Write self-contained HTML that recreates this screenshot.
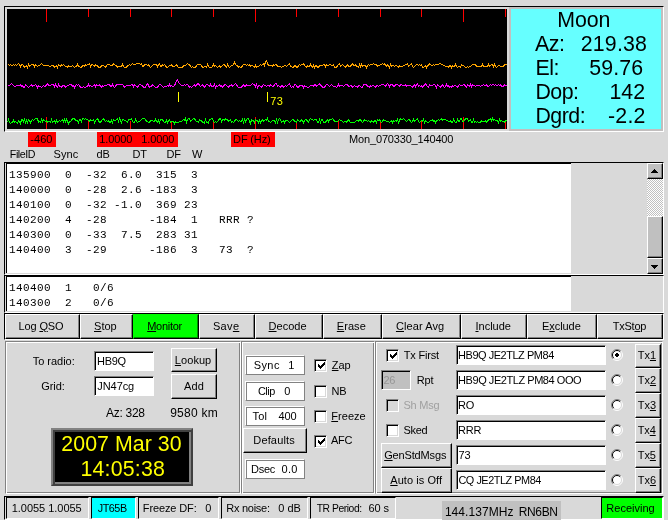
<!DOCTYPE html>
<html lang="en"><head><meta charset="utf-8"><title>WSJT 5 - JT65B</title>
<style>
html,body{margin:0;padding:0}
body{width:668px;height:520px;overflow:hidden;background:#d9d9d9;font-family:"Liberation Sans",Arial,sans-serif;font-size:11px;color:#000}
#app{position:relative;width:668px;height:520px;overflow:hidden;background:#d9d9d9}
#app div{position:absolute;box-sizing:border-box}
.t{position:absolute;line-height:1;white-space:pre;font-family:"Liberation Sans",Arial,sans-serif}
.m{font-family:"Liberation Mono","Courier New",monospace;letter-spacing:0.4px}
u{text-decoration:underline;text-underline-offset:1px;text-decoration-thickness:1px}
.sunken{border:1px solid;border-color:#828282 #fff #fff #828282;box-shadow:inset 1px 1px 0 #000}
.entry{border:1px solid;border-color:#828282 #fff #fff #828282;box-shadow:inset 1px 1px 0 #000;background:#fff}
.raised{border:1px solid;border-color:#fff #000 #000 #fff;box-shadow:inset -1px -1px 0 #828282}
.btn{border:1px solid #000;box-shadow:inset 1px 1px 0 #fff,inset -1px -1px 0 #828282}
.groove{border:1px solid;border-color:#828282 #fff #fff #828282;box-shadow:inset 1px 1px 0 #fff,inset -1px -1px 0 #828282}
.ridge{border:1px solid;border-color:#fff #828282 #828282 #fff;box-shadow:inset 1px 1px 0 #828282,inset -1px -1px 0 #fff;background:#fff}
.chk{border:1px solid;border-color:#828282 #fff #fff #828282;box-shadow:inset 1px 1px 0 #000,inset -1px -1px 0 #d9d9d9;background:#fff}
.red{background:#ff0000}
svg{position:absolute;left:0;top:0;overflow:visible}
#app #txt{left:0;top:0;width:668px;height:520px;will-change:transform}
.sunk1{border:1px solid;border-color:#000 #fff #fff #000}

</style></head>
<body>
<div id="app">
<div class="sunk1" style="left:4px;top:6px;width:660px;height:126px;"></div>
<div style="left:7px;top:9px;width:500px;height:120px;background:#000;overflow:hidden"><svg width="500" height="120" viewBox="0 0 500 120" ><rect x="39" y="0" width="1" height="13" fill="#f00" shape-rendering="crispEdges"/><rect x="39" y="108" width="1" height="12" fill="#f00" shape-rendering="crispEdges"/><rect x="81" y="0" width="1" height="8" fill="#f00" shape-rendering="crispEdges"/><rect x="81" y="112" width="1" height="8" fill="#f00" shape-rendering="crispEdges"/><rect x="123" y="0" width="1" height="8" fill="#f00" shape-rendering="crispEdges"/><rect x="123" y="112" width="1" height="8" fill="#f00" shape-rendering="crispEdges"/><rect x="164" y="0" width="1" height="8" fill="#f00" shape-rendering="crispEdges"/><rect x="164" y="112" width="1" height="8" fill="#f00" shape-rendering="crispEdges"/><rect x="206" y="0" width="1" height="8" fill="#f00" shape-rendering="crispEdges"/><rect x="206" y="112" width="1" height="8" fill="#f00" shape-rendering="crispEdges"/><rect x="248" y="0" width="1" height="13" fill="#f00" shape-rendering="crispEdges"/><rect x="248" y="108" width="1" height="12" fill="#f00" shape-rendering="crispEdges"/><rect x="289" y="0" width="1" height="8" fill="#f00" shape-rendering="crispEdges"/><rect x="289" y="112" width="1" height="8" fill="#f00" shape-rendering="crispEdges"/><rect x="331" y="0" width="1" height="8" fill="#f00" shape-rendering="crispEdges"/><rect x="331" y="112" width="1" height="8" fill="#f00" shape-rendering="crispEdges"/><rect x="373" y="0" width="1" height="8" fill="#f00" shape-rendering="crispEdges"/><rect x="373" y="112" width="1" height="8" fill="#f00" shape-rendering="crispEdges"/><rect x="414" y="0" width="1" height="8" fill="#f00" shape-rendering="crispEdges"/><rect x="414" y="112" width="1" height="8" fill="#f00" shape-rendering="crispEdges"/><rect x="456" y="0" width="1" height="13" fill="#f00" shape-rendering="crispEdges"/><rect x="456" y="108" width="1" height="12" fill="#f00" shape-rendering="crispEdges"/><rect x="498" y="0" width="1" height="8" fill="#f00" shape-rendering="crispEdges"/><rect x="498" y="112" width="1" height="8" fill="#f00" shape-rendering="crispEdges"/><polyline fill="none" stroke="#ffa500" stroke-width="1" shape-rendering="crispEdges" points="0.5,56.5 1.5,55.5 2.5,56.5 3.5,55.5 4.5,56.5 5.5,56.5 6.5,55.5 7.5,56.5 8.5,55.5 9.5,56.5 10.5,55.5 11.5,54.5 12.5,55.5 13.5,57.5 14.5,55.5 15.5,55.5 16.5,56.5 17.5,58.5 18.5,57.5 19.5,56.5 20.5,58.5 21.5,55.5 22.5,57.5 23.5,56.5 24.5,55.5 25.5,55.5 26.5,55.5 27.5,57.5 28.5,55.5 29.5,56.5 30.5,57.5 31.5,56.5 32.5,56.5 33.5,55.5 34.5,54.5 35.5,55.5 36.5,56.5 37.5,56.5 38.5,56.5 39.5,56.5 40.5,56.5 41.5,56.5 42.5,57.5 43.5,57.5 44.5,56.5 45.5,56.5 46.5,56.5 47.5,58.5 48.5,57.5 49.5,56.5 50.5,58.5 51.5,55.5 52.5,56.5 53.5,57.5 54.5,55.5 55.5,56.5 56.5,55.5 57.5,56.5 58.5,57.5 59.5,57.5 60.5,58.5 61.5,56.5 62.5,57.5 63.5,57.5 64.5,57.5 65.5,56.5 66.5,57.5 67.5,58.5 68.5,57.5 69.5,57.5 70.5,55.5 71.5,57.5 72.5,57.5 73.5,58.5 74.5,58.5 75.5,56.5 76.5,56.5 77.5,57.5 78.5,55.5 79.5,56.5 80.5,55.5 81.5,55.5 82.5,54.5 83.5,57.5 84.5,55.5 85.5,55.5 86.5,56.5 87.5,57.5 88.5,55.5 89.5,56.5 90.5,56.5 91.5,58.5 92.5,58.5 93.5,58.5 94.5,56.5 95.5,56.5 96.5,56.5 97.5,57.5 98.5,58.5 99.5,56.5 100.5,55.5 101.5,55.5 102.5,55.5 103.5,56.5 104.5,56.5 105.5,56.5 106.5,54.5 107.5,55.5 108.5,56.5 109.5,56.5 110.5,58.5 111.5,57.5 112.5,57.5 113.5,57.5 114.5,57.5 115.5,55.5 116.5,57.5 117.5,58.5 118.5,58.5 119.5,58.5 120.5,56.5 121.5,56.5 122.5,55.5 123.5,56.5 124.5,55.5 125.5,54.5 126.5,55.5 127.5,55.5 128.5,55.5 129.5,54.5 130.5,54.5 131.5,54.5 132.5,54.5 133.5,55.5 134.5,54.5 135.5,57.5 136.5,57.5 137.5,55.5 138.5,55.5 139.5,55.5 140.5,56.5 141.5,55.5 142.5,57.5 143.5,58.5 144.5,57.5 145.5,56.5 146.5,55.5 147.5,55.5 148.5,55.5 149.5,55.5 150.5,57.5 151.5,55.5 152.5,54.5 153.5,57.5 154.5,57.5 155.5,55.5 156.5,56.5 157.5,55.5 158.5,56.5 159.5,58.5 160.5,58.5 161.5,57.5 162.5,56.5 163.5,56.5 164.5,55.5 165.5,57.5 166.5,57.5 167.5,57.5 168.5,56.5 169.5,55.5 170.5,57.5 171.5,58.5 172.5,58.5 173.5,58.5 174.5,58.5 175.5,58.5 176.5,56.5 177.5,56.5 178.5,56.5 179.5,55.5 180.5,54.5 181.5,55.5 182.5,55.5 183.5,57.5 184.5,58.5 185.5,57.5 186.5,58.5 187.5,58.5 188.5,58.5 189.5,56.5 190.5,55.5 191.5,55.5 192.5,55.5 193.5,55.5 194.5,56.5 195.5,58.5 196.5,58.5 197.5,57.5 198.5,57.5 199.5,58.5 200.5,55.5 201.5,57.5 202.5,58.5 203.5,58.5 204.5,58.5 205.5,57.5 206.5,55.5 207.5,57.5 208.5,56.5 209.5,57.5 210.5,58.5 211.5,57.5 212.5,56.5 213.5,58.5 214.5,57.5 215.5,56.5 216.5,55.5 217.5,55.5 218.5,57.5 219.5,58.5 220.5,55.5 221.5,57.5 222.5,58.5 223.5,57.5 224.5,56.5 225.5,56.5 226.5,55.5 227.5,53.5 228.5,55.5 229.5,56.5 230.5,56.5 231.5,58.5 232.5,57.5 233.5,58.5 234.5,58.5 235.5,56.5 236.5,55.5 237.5,55.5 238.5,55.5 239.5,56.5 240.5,55.5 241.5,56.5 242.5,55.5 243.5,57.5 244.5,56.5 245.5,56.5 246.5,57.5 247.5,58.5 248.5,56.5 249.5,58.5 250.5,57.5 251.5,57.5 252.5,56.5 253.5,55.5 254.5,56.5 255.5,55.5 256.5,54.5 257.5,56.5 258.5,52.5 259.5,51.5 260.5,54.5 261.5,56.5 262.5,56.5 263.5,56.5 264.5,56.5 265.5,57.5 266.5,55.5 267.5,56.5 268.5,55.5 269.5,55.5 270.5,57.5 271.5,57.5 272.5,57.5 273.5,57.5 274.5,58.5 275.5,57.5 276.5,57.5 277.5,56.5 278.5,56.5 279.5,57.5 280.5,56.5 281.5,55.5 282.5,54.5 283.5,57.5 284.5,57.5 285.5,58.5 286.5,58.5 287.5,56.5 288.5,56.5 289.5,58.5 290.5,58.5 291.5,56.5 292.5,55.5 293.5,56.5 294.5,55.5 295.5,55.5 296.5,54.5 297.5,56.5 298.5,57.5 299.5,58.5 300.5,56.5 301.5,57.5 302.5,57.5 303.5,55.5 304.5,57.5 305.5,58.5 306.5,56.5 307.5,58.5 308.5,56.5 309.5,56.5 310.5,58.5 311.5,58.5 312.5,56.5 313.5,56.5 314.5,56.5 315.5,56.5 316.5,55.5 317.5,55.5 318.5,57.5 319.5,55.5 320.5,56.5 321.5,56.5 322.5,55.5 323.5,55.5 324.5,56.5 325.5,56.5 326.5,55.5 327.5,58.5 328.5,58.5 329.5,58.5 330.5,56.5 331.5,55.5 332.5,54.5 333.5,57.5 334.5,56.5 335.5,55.5 336.5,56.5 337.5,57.5 338.5,58.5 339.5,56.5 340.5,55.5 341.5,57.5 342.5,57.5 343.5,57.5 344.5,55.5 345.5,54.5 346.5,56.5 347.5,56.5 348.5,55.5 349.5,57.5 350.5,57.5 351.5,58.5 352.5,55.5 353.5,57.5 354.5,55.5 355.5,57.5 356.5,56.5 357.5,56.5 358.5,56.5 359.5,58.5 360.5,56.5 361.5,55.5 362.5,56.5 363.5,55.5 364.5,55.5 365.5,55.5 366.5,54.5 367.5,55.5 368.5,55.5 369.5,55.5 370.5,57.5 371.5,56.5 372.5,56.5 373.5,55.5 374.5,55.5 375.5,54.5 376.5,55.5 377.5,54.5 378.5,56.5 379.5,57.5 380.5,55.5 381.5,56.5 382.5,58.5 383.5,55.5 384.5,57.5 385.5,56.5 386.5,56.5 387.5,57.5 388.5,56.5 389.5,56.5 390.5,57.5 391.5,58.5 392.5,56.5 393.5,57.5 394.5,57.5 395.5,57.5 396.5,56.5 397.5,56.5 398.5,55.5 399.5,55.5 400.5,54.5 401.5,57.5 402.5,56.5 403.5,55.5 404.5,54.5 405.5,57.5 406.5,58.5 407.5,57.5 408.5,56.5 409.5,55.5 410.5,55.5 411.5,56.5 412.5,55.5 413.5,56.5 414.5,55.5 415.5,58.5 416.5,58.5 417.5,57.5 418.5,56.5 419.5,58.5 420.5,56.5 421.5,56.5 422.5,54.5 423.5,55.5 424.5,56.5 425.5,56.5 426.5,55.5 427.5,56.5 428.5,55.5 429.5,55.5 430.5,55.5 431.5,55.5 432.5,54.5 433.5,54.5 434.5,55.5 435.5,55.5 436.5,56.5 437.5,56.5 438.5,57.5 439.5,57.5 440.5,57.5 441.5,58.5 442.5,56.5 443.5,56.5 444.5,58.5 445.5,56.5 446.5,57.5 447.5,57.5 448.5,55.5 449.5,57.5 450.5,58.5 451.5,57.5 452.5,57.5 453.5,58.5 454.5,55.5 455.5,56.5 456.5,56.5 457.5,57.5 458.5,58.5 459.5,58.5 460.5,57.5 461.5,58.5 462.5,57.5 463.5,57.5 464.5,56.5 465.5,55.5 466.5,55.5 467.5,55.5 468.5,55.5 469.5,57.5 470.5,57.5 471.5,57.5 472.5,57.5 473.5,57.5 474.5,57.5 475.5,55.5 476.5,57.5 477.5,57.5 478.5,57.5 479.5,57.5 480.5,57.5 481.5,55.5 482.5,57.5 483.5,56.5 484.5,55.5 485.5,55.5 486.5,57.5 487.5,55.5 488.5,57.5 489.5,58.5 490.5,57.5 491.5,56.5 492.5,56.5 493.5,57.5 494.5,57.5 495.5,57.5 496.5,57.5 497.5,55.5 498.5,55.5 499.5,55.5"/><polyline fill="none" stroke="#ff00ff" stroke-width="1" shape-rendering="crispEdges" points="0.5,77.5 1.5,76.5 2.5,76.5 3.5,75.5 4.5,74.5 5.5,75.5 6.5,76.5 7.5,77.5 8.5,77.5 9.5,76.5 10.5,76.5 11.5,76.5 12.5,76.5 13.5,75.5 14.5,77.5 15.5,76.5 16.5,78.5 17.5,78.5 18.5,75.5 19.5,76.5 20.5,77.5 21.5,78.5 22.5,77.5 23.5,76.5 24.5,75.5 25.5,77.5 26.5,76.5 27.5,76.5 28.5,75.5 29.5,76.5 30.5,78.5 31.5,76.5 32.5,77.5 33.5,77.5 34.5,78.5 35.5,77.5 36.5,76.5 37.5,77.5 38.5,77.5 39.5,75.5 40.5,74.5 41.5,76.5 42.5,76.5 43.5,76.5 44.5,75.5 45.5,75.5 46.5,75.5 47.5,77.5 48.5,75.5 49.5,77.5 50.5,78.5 51.5,75.5 52.5,77.5 53.5,77.5 54.5,78.5 55.5,76.5 56.5,76.5 57.5,76.5 58.5,78.5 59.5,77.5 60.5,76.5 61.5,76.5 62.5,75.5 63.5,75.5 64.5,75.5 65.5,77.5 66.5,76.5 67.5,78.5 68.5,76.5 69.5,75.5 70.5,76.5 71.5,75.5 72.5,76.5 73.5,78.5 74.5,78.5 75.5,78.5 76.5,77.5 77.5,78.5 78.5,78.5 79.5,77.5 80.5,77.5 81.5,75.5 82.5,77.5 83.5,76.5 84.5,77.5 85.5,77.5 86.5,76.5 87.5,75.5 88.5,77.5 89.5,75.5 90.5,76.5 91.5,76.5 92.5,75.5 93.5,77.5 94.5,78.5 95.5,76.5 96.5,77.5 97.5,76.5 98.5,76.5 99.5,76.5 100.5,75.5 101.5,75.5 102.5,75.5 103.5,77.5 104.5,77.5 105.5,75.5 106.5,77.5 107.5,78.5 108.5,77.5 109.5,75.5 110.5,75.5 111.5,75.5 112.5,75.5 113.5,75.5 114.5,75.5 115.5,75.5 116.5,76.5 117.5,78.5 118.5,77.5 119.5,76.5 120.5,76.5 121.5,76.5 122.5,76.5 123.5,76.5 124.5,75.5 125.5,75.5 126.5,77.5 127.5,75.5 128.5,76.5 129.5,77.5 130.5,78.5 131.5,76.5 132.5,75.5 133.5,75.5 134.5,76.5 135.5,76.5 136.5,78.5 137.5,78.5 138.5,78.5 139.5,75.5 140.5,74.5 141.5,76.5 142.5,78.5 143.5,77.5 144.5,77.5 145.5,75.5 146.5,76.5 147.5,77.5 148.5,78.5 149.5,78.5 150.5,78.5 151.5,76.5 152.5,75.5 153.5,75.5 154.5,76.5 155.5,77.5 156.5,78.5 157.5,77.5 158.5,77.5 159.5,77.5 160.5,76.5 161.5,77.5 162.5,75.5 163.5,77.5 164.5,76.5 165.5,77.5 166.5,77.5 167.5,76.5 168.5,74.5 169.5,71.5 170.5,70.5 171.5,73.5 172.5,74.5 173.5,75.5 174.5,76.5 175.5,76.5 176.5,76.5 177.5,75.5 178.5,76.5 179.5,75.5 180.5,75.5 181.5,76.5 182.5,78.5 183.5,77.5 184.5,78.5 185.5,77.5 186.5,76.5 187.5,75.5 188.5,77.5 189.5,76.5 190.5,74.5 191.5,74.5 192.5,76.5 193.5,77.5 194.5,76.5 195.5,75.5 196.5,77.5 197.5,78.5 198.5,76.5 199.5,75.5 200.5,75.5 201.5,76.5 202.5,77.5 203.5,75.5 204.5,77.5 205.5,77.5 206.5,77.5 207.5,75.5 208.5,78.5 209.5,76.5 210.5,77.5 211.5,76.5 212.5,75.5 213.5,77.5 214.5,76.5 215.5,78.5 216.5,77.5 217.5,75.5 218.5,75.5 219.5,76.5 220.5,77.5 221.5,78.5 222.5,76.5 223.5,76.5 224.5,75.5 225.5,77.5 226.5,76.5 227.5,75.5 228.5,74.5 229.5,75.5 230.5,77.5 231.5,78.5 232.5,78.5 233.5,78.5 234.5,78.5 235.5,76.5 236.5,75.5 237.5,77.5 238.5,77.5 239.5,75.5 240.5,76.5 241.5,76.5 242.5,76.5 243.5,76.5 244.5,75.5 245.5,74.5 246.5,75.5 247.5,75.5 248.5,77.5 249.5,75.5 250.5,78.5 251.5,76.5 252.5,76.5 253.5,77.5 254.5,78.5 255.5,76.5 256.5,75.5 257.5,76.5 258.5,76.5 259.5,77.5 260.5,76.5 261.5,76.5 262.5,77.5 263.5,75.5 264.5,76.5 265.5,77.5 266.5,77.5 267.5,75.5 268.5,74.5 269.5,74.5 270.5,77.5 271.5,76.5 272.5,77.5 273.5,78.5 274.5,76.5 275.5,76.5 276.5,78.5 277.5,77.5 278.5,76.5 279.5,77.5 280.5,76.5 281.5,75.5 282.5,74.5 283.5,77.5 284.5,78.5 285.5,77.5 286.5,78.5 287.5,75.5 288.5,75.5 289.5,76.5 290.5,78.5 291.5,78.5 292.5,76.5 293.5,76.5 294.5,76.5 295.5,76.5 296.5,78.5 297.5,76.5 298.5,77.5 299.5,77.5 300.5,78.5 301.5,78.5 302.5,77.5 303.5,76.5 304.5,76.5 305.5,76.5 306.5,77.5 307.5,75.5 308.5,75.5 309.5,77.5 310.5,76.5 311.5,75.5 312.5,74.5 313.5,76.5 314.5,76.5 315.5,78.5 316.5,78.5 317.5,78.5 318.5,76.5 319.5,75.5 320.5,75.5 321.5,76.5 322.5,77.5 323.5,76.5 324.5,75.5 325.5,76.5 326.5,77.5 327.5,77.5 328.5,77.5 329.5,78.5 330.5,77.5 331.5,75.5 332.5,77.5 333.5,76.5 334.5,76.5 335.5,76.5 336.5,77.5 337.5,76.5 338.5,75.5 339.5,75.5 340.5,75.5 341.5,77.5 342.5,77.5 343.5,76.5 344.5,76.5 345.5,78.5 346.5,77.5 347.5,76.5 348.5,77.5 349.5,77.5 350.5,78.5 351.5,76.5 352.5,76.5 353.5,77.5 354.5,78.5 355.5,78.5 356.5,75.5 357.5,75.5 358.5,75.5 359.5,75.5 360.5,77.5 361.5,77.5 362.5,78.5 363.5,76.5 364.5,77.5 365.5,76.5 366.5,76.5 367.5,77.5 368.5,78.5 369.5,76.5 370.5,76.5 371.5,77.5 372.5,76.5 373.5,76.5 374.5,75.5 375.5,75.5 376.5,75.5 377.5,76.5 378.5,77.5 379.5,75.5 380.5,74.5 381.5,75.5 382.5,77.5 383.5,75.5 384.5,75.5 385.5,75.5 386.5,77.5 387.5,77.5 388.5,75.5 389.5,75.5 390.5,75.5 391.5,76.5 392.5,77.5 393.5,75.5 394.5,75.5 395.5,76.5 396.5,76.5 397.5,76.5 398.5,75.5 399.5,77.5 400.5,76.5 401.5,76.5 402.5,76.5 403.5,76.5 404.5,77.5 405.5,78.5 406.5,76.5 407.5,75.5 408.5,77.5 409.5,75.5 410.5,74.5 411.5,77.5 412.5,76.5 413.5,77.5 414.5,76.5 415.5,78.5 416.5,77.5 417.5,75.5 418.5,74.5 419.5,76.5 420.5,77.5 421.5,78.5 422.5,75.5 423.5,76.5 424.5,76.5 425.5,76.5 426.5,75.5 427.5,75.5 428.5,76.5 429.5,78.5 430.5,75.5 431.5,76.5 432.5,77.5 433.5,78.5 434.5,76.5 435.5,75.5 436.5,77.5 437.5,78.5 438.5,77.5 439.5,75.5 440.5,77.5 441.5,76.5 442.5,78.5 443.5,77.5 444.5,78.5 445.5,76.5 446.5,77.5 447.5,76.5 448.5,76.5 449.5,77.5 450.5,78.5 451.5,76.5 452.5,75.5 453.5,76.5 454.5,76.5 455.5,76.5 456.5,75.5 457.5,75.5 458.5,77.5 459.5,78.5 460.5,75.5 461.5,76.5 462.5,77.5 463.5,75.5 464.5,77.5 465.5,75.5 466.5,76.5 467.5,76.5 468.5,77.5 469.5,76.5 470.5,76.5 471.5,76.5 472.5,76.5 473.5,77.5 474.5,76.5 475.5,76.5 476.5,75.5 477.5,76.5 478.5,76.5 479.5,75.5 480.5,77.5 481.5,77.5 482.5,76.5 483.5,75.5 484.5,76.5 485.5,75.5 486.5,75.5 487.5,76.5 488.5,75.5 489.5,76.5 490.5,76.5 491.5,75.5 492.5,76.5 493.5,75.5 494.5,77.5 495.5,77.5 496.5,77.5 497.5,75.5 498.5,76.5 499.5,76.5"/><polyline fill="none" stroke="#00ff00" stroke-width="1" shape-rendering="crispEdges" points="0.5,113.5 1.5,110.5 2.5,113.5 3.5,114.5 4.5,113.5 5.5,113.5 6.5,111.5 7.5,113.5 8.5,112.5 9.5,113.5 10.5,114.5 11.5,111.5 12.5,112.5 13.5,114.5 14.5,110.5 15.5,110.5 16.5,112.5 17.5,110.5 18.5,113.5 19.5,111.5 20.5,113.5 21.5,110.5 22.5,111.5 23.5,113.5 24.5,111.5 25.5,110.5 26.5,111.5 27.5,110.5 28.5,109.5 29.5,109.5 30.5,109.5 31.5,113.5 32.5,112.5 33.5,113.5 34.5,110.5 35.5,112.5 36.5,110.5 37.5,111.5 38.5,112.5 39.5,111.5 40.5,113.5 41.5,112.5 42.5,112.5 43.5,113.5 44.5,110.5 45.5,113.5 46.5,112.5 47.5,111.5 48.5,113.5 49.5,111.5 50.5,113.5 51.5,112.5 52.5,111.5 53.5,112.5 54.5,111.5 55.5,110.5 56.5,112.5 57.5,110.5 58.5,112.5 59.5,110.5 60.5,112.5 61.5,114.5 62.5,112.5 63.5,112.5 64.5,111.5 65.5,109.5 66.5,109.5 67.5,109.5 68.5,111.5 69.5,111.5 70.5,111.5 71.5,113.5 72.5,110.5 73.5,110.5 74.5,112.5 75.5,109.5 76.5,109.5 77.5,110.5 78.5,109.5 79.5,110.5 80.5,110.5 81.5,111.5 82.5,112.5 83.5,110.5 84.5,111.5 85.5,111.5 86.5,110.5 87.5,113.5 88.5,111.5 89.5,110.5 90.5,109.5 91.5,111.5 92.5,113.5 93.5,113.5 94.5,111.5 95.5,110.5 96.5,109.5 97.5,111.5 98.5,112.5 99.5,111.5 100.5,112.5 101.5,111.5 102.5,113.5 103.5,113.5 104.5,111.5 105.5,113.5 106.5,110.5 107.5,111.5 108.5,111.5 109.5,110.5 110.5,109.5 111.5,112.5 112.5,109.5 113.5,111.5 114.5,113.5 115.5,110.5 116.5,110.5 117.5,111.5 118.5,111.5 119.5,112.5 120.5,113.5 121.5,110.5 122.5,110.5 123.5,110.5 124.5,109.5 125.5,112.5 126.5,113.5 127.5,113.5 128.5,110.5 129.5,112.5 130.5,113.5 131.5,112.5 132.5,112.5 133.5,111.5 134.5,110.5 135.5,109.5 136.5,109.5 137.5,109.5 138.5,110.5 139.5,112.5 140.5,112.5 141.5,113.5 142.5,113.5 143.5,111.5 144.5,111.5 145.5,111.5 146.5,112.5 147.5,112.5 148.5,110.5 149.5,112.5 150.5,113.5 151.5,111.5 152.5,113.5 153.5,110.5 154.5,110.5 155.5,110.5 156.5,112.5 157.5,113.5 158.5,113.5 159.5,111.5 160.5,113.5 161.5,111.5 162.5,110.5 163.5,113.5 164.5,112.5 165.5,112.5 166.5,112.5 167.5,114.5 168.5,112.5 169.5,113.5 170.5,113.5 171.5,113.5 172.5,112.5 173.5,112.5 174.5,112.5 175.5,111.5 176.5,110.5 177.5,111.5 178.5,109.5 179.5,113.5 180.5,110.5 181.5,109.5 182.5,109.5 183.5,112.5 184.5,111.5 185.5,110.5 186.5,109.5 187.5,109.5 188.5,111.5 189.5,112.5 190.5,112.5 191.5,113.5 192.5,110.5 193.5,111.5 194.5,111.5 195.5,113.5 196.5,113.5 197.5,114.5 198.5,110.5 199.5,113.5 200.5,113.5 201.5,114.5 202.5,110.5 203.5,110.5 204.5,109.5 205.5,109.5 206.5,112.5 207.5,113.5 208.5,112.5 209.5,113.5 210.5,112.5 211.5,111.5 212.5,109.5 213.5,109.5 214.5,112.5 215.5,110.5 216.5,110.5 217.5,111.5 218.5,109.5 219.5,110.5 220.5,110.5 221.5,112.5 222.5,111.5 223.5,110.5 224.5,113.5 225.5,112.5 226.5,113.5 227.5,112.5 228.5,110.5 229.5,110.5 230.5,111.5 231.5,112.5 232.5,111.5 233.5,112.5 234.5,112.5 235.5,110.5 236.5,113.5 237.5,110.5 238.5,112.5 239.5,110.5 240.5,109.5 241.5,109.5 242.5,112.5 243.5,114.5 244.5,110.5 245.5,111.5 246.5,111.5 247.5,113.5 248.5,110.5 249.5,111.5 250.5,111.5 251.5,113.5 252.5,111.5 253.5,113.5 254.5,111.5 255.5,110.5 256.5,112.5 257.5,111.5 258.5,110.5 259.5,111.5 260.5,109.5 261.5,112.5 262.5,112.5 263.5,113.5 264.5,112.5 265.5,111.5 266.5,111.5 267.5,111.5 268.5,113.5 269.5,110.5 270.5,113.5 271.5,110.5 272.5,109.5 273.5,110.5 274.5,113.5 275.5,112.5 276.5,111.5 277.5,113.5 278.5,111.5 279.5,111.5 280.5,111.5 281.5,112.5 282.5,113.5 283.5,112.5 284.5,111.5 285.5,110.5 286.5,110.5 287.5,112.5 288.5,112.5 289.5,113.5 290.5,110.5 291.5,111.5 292.5,112.5 293.5,112.5 294.5,110.5 295.5,111.5 296.5,113.5 297.5,111.5 298.5,110.5 299.5,110.5 300.5,112.5 301.5,113.5 302.5,110.5 303.5,109.5 304.5,110.5 305.5,110.5 306.5,111.5 307.5,110.5 308.5,110.5 309.5,110.5 310.5,113.5 311.5,113.5 312.5,110.5 313.5,113.5 314.5,110.5 315.5,110.5 316.5,113.5 317.5,113.5 318.5,113.5 319.5,111.5 320.5,110.5 321.5,112.5 322.5,110.5 323.5,110.5 324.5,110.5 325.5,109.5 326.5,110.5 327.5,112.5 328.5,112.5 329.5,112.5 330.5,112.5 331.5,111.5 332.5,110.5 333.5,111.5 334.5,111.5 335.5,112.5 336.5,113.5 337.5,112.5 338.5,112.5 339.5,113.5 340.5,111.5 341.5,110.5 342.5,112.5 343.5,113.5 344.5,113.5 345.5,113.5 346.5,113.5 347.5,113.5 348.5,112.5 349.5,111.5 350.5,111.5 351.5,112.5 352.5,110.5 353.5,110.5 354.5,112.5 355.5,113.5 356.5,112.5 357.5,110.5 358.5,111.5 359.5,111.5 360.5,112.5 361.5,111.5 362.5,112.5 363.5,113.5 364.5,111.5 365.5,112.5 366.5,113.5 367.5,111.5 368.5,111.5 369.5,113.5 370.5,110.5 371.5,111.5 372.5,110.5 373.5,112.5 374.5,113.5 375.5,112.5 376.5,110.5 377.5,111.5 378.5,111.5 379.5,112.5 380.5,112.5 381.5,112.5 382.5,113.5 383.5,112.5 384.5,111.5 385.5,113.5 386.5,111.5 387.5,112.5 388.5,111.5 389.5,112.5 390.5,110.5 391.5,113.5 392.5,111.5 393.5,109.5 394.5,110.5 395.5,110.5 396.5,109.5 397.5,110.5 398.5,111.5 399.5,112.5 400.5,111.5 401.5,110.5 402.5,110.5 403.5,112.5 404.5,113.5 405.5,112.5 406.5,110.5 407.5,112.5 408.5,111.5 409.5,110.5 410.5,109.5 411.5,112.5 412.5,113.5 413.5,112.5 414.5,111.5 415.5,112.5 416.5,110.5 417.5,113.5 418.5,111.5 419.5,112.5 420.5,113.5 421.5,113.5 422.5,112.5 423.5,111.5 424.5,111.5 425.5,110.5 426.5,112.5 427.5,111.5 428.5,113.5 429.5,111.5 430.5,111.5 431.5,110.5 432.5,111.5 433.5,110.5 434.5,109.5 435.5,111.5 436.5,110.5 437.5,110.5 438.5,110.5 439.5,111.5 440.5,111.5 441.5,112.5 442.5,112.5 443.5,111.5 444.5,113.5 445.5,113.5 446.5,110.5 447.5,112.5 448.5,113.5 449.5,113.5 450.5,110.5 451.5,112.5 452.5,112.5 453.5,109.5 454.5,109.5 455.5,112.5 456.5,112.5 457.5,111.5 458.5,109.5 459.5,109.5 460.5,109.5 461.5,112.5 462.5,111.5 463.5,110.5 464.5,113.5 465.5,113.5 466.5,110.5 467.5,113.5 468.5,112.5 469.5,113.5 470.5,112.5 471.5,113.5 472.5,113.5 473.5,113.5 474.5,111.5 475.5,112.5 476.5,112.5 477.5,112.5 478.5,111.5 479.5,113.5 480.5,112.5 481.5,110.5 482.5,110.5 483.5,109.5 484.5,111.5 485.5,109.5 486.5,111.5 487.5,110.5 488.5,111.5 489.5,111.5 490.5,111.5 491.5,113.5 492.5,110.5 493.5,112.5 494.5,111.5 495.5,112.5 496.5,112.5 497.5,113.5 498.5,111.5 499.5,111.5"/><rect x="171" y="83" width="1" height="10" fill="#ff0"/><rect x="260" y="83" width="1" height="10" fill="#ff0"/></svg></div>
<div style="left:509px;top:7px;width:154px;height:124px;background:#66ffff;border:2px solid #c2bebe"></div>
<div class="red" style="left:28px;top:132px;width:28px;height:15px;"></div>
<div class="red" style="left:97px;top:132px;width:81px;height:15px;"></div>
<div class="red" style="left:231px;top:132px;width:44px;height:15px;"></div>
<div class="sunk1" style="left:4px;top:162px;width:660px;height:113px;"></div>
<div style="left:6px;top:163px;width:565px;height:110px;background:#fff;border-left:1px solid #000;border-top:1px solid #000"></div>
<div class="sunk1" style="left:4px;top:275px;width:660px;height:38px;"></div>
<div style="left:6px;top:276px;width:565px;height:35px;background:#fff;border-left:1px solid #000;border-top:1px solid #000"></div>
<div style="left:647px;top:163px;width:16px;height:111px;background:repeating-conic-gradient(#fff 0% 25%, #c0c0c0 0% 50%) 0 0/2px 2px"></div>
<div style="left:647px;top:163px;width:16px;height:16px;background:#c0c0c0;border:1px solid;border-color:#fff #000 #000 #fff;box-shadow:inset -1px -1px 0 #808080"><svg width="16" height="16" shape-rendering="crispEdges"><path d="M6 5h1v1h1v1h1v1h1v1h-7v-1h1v-1h1v-1h1z" fill="#000"/></svg></div>
<div style="left:647px;top:216px;width:16px;height:42px;background:#c0c0c0;border:1px solid;border-color:#fff #000 #000 #fff;box-shadow:inset -1px -1px 0 #808080"></div>
<div style="left:647px;top:258px;width:16px;height:16px;background:#c0c0c0;border:1px solid;border-color:#fff #000 #000 #fff;box-shadow:inset -1px -1px 0 #808080"><svg width="16" height="16" shape-rendering="crispEdges"><path d="M3 6h7v1h-1v1h-1v1h-1v1h-1v-1h-1v-1h-1v-1h-1z" fill="#000"/></svg></div>
<div class="sunk1" style="left:4px;top:313px;width:660px;height:27px;"></div>
<div class="raised" style="left:5px;top:314px;width:75px;height:25px;"></div>
<div class="raised" style="left:80px;top:314px;width:53px;height:25px;"></div>
<div class="raised" style="left:133px;top:314px;width:66px;height:25px;background:#00ff00;border-color:#00ff00 #000 #000 #00ff00;box-shadow:inset -1px -1px 0 #008e00;"></div>
<div class="raised" style="left:199px;top:314px;width:56px;height:25px;"></div>
<div class="raised" style="left:255px;top:314px;width:68px;height:25px;"></div>
<div class="raised" style="left:323px;top:314px;width:59px;height:25px;"></div>
<div class="raised" style="left:382px;top:314px;width:79px;height:25px;"></div>
<div class="raised" style="left:461px;top:314px;width:66px;height:25px;"></div>
<div class="raised" style="left:527px;top:314px;width:70px;height:25px;"></div>
<div class="raised" style="left:597px;top:314px;width:66px;height:25px;"></div>
<div class="groove" style="left:5px;top:341px;width:236px;height:153px;"></div>
<div class="groove" style="left:241px;top:341px;width:134px;height:153px;"></div>
<div class="groove" style="left:375px;top:341px;width:288px;height:153px;"></div>
<div class="entry" style="left:94px;top:351px;width:60px;height:20px;"></div>
<div class="entry" style="left:94px;top:376px;width:60px;height:20px;"></div>
<div class="raised" style="left:171px;top:348px;width:46px;height:24px;"></div>
<div class="raised" style="left:171px;top:374px;width:46px;height:25px;"></div>
<div style="left:51px;top:428px;width:142px;height:58px;background:#000;border:2px solid;border-color:#828282 #404040 #404040 #828282;box-shadow:inset 2px 2px 0 #404040,inset -2px -2px 0 #828282"></div>
<div class="ridge" style="left:245px;top:355px;width:60px;height:20px;"></div>
<div class="ridge" style="left:245px;top:381px;width:60px;height:20px;"></div>
<div class="ridge" style="left:245px;top:406px;width:60px;height:20px;"></div>
<div class="raised" style="left:243px;top:428px;width:64px;height:25px;"></div>
<div class="ridge" style="left:245px;top:459px;width:60px;height:20px;"></div>
<div class="chk" style="left:314px;top:359px;width:13px;height:13px;"><svg width="13" height="13" shape-rendering="crispEdges"><path d="M3 4h1v1h1v1h1v-1h1v-1h1v-1h1v-1h1v3h-1v1h-1v1h-1v1h-1v1h-1v-1h-1v-1h-1z" fill="#000"/></svg></div>
<div class="chk" style="left:314px;top:385px;width:13px;height:13px;"></div>
<div class="chk" style="left:314px;top:410px;width:13px;height:13px;"></div>
<div class="chk" style="left:314px;top:435px;width:13px;height:13px;"><svg width="13" height="13" shape-rendering="crispEdges"><path d="M3 4h1v1h1v1h1v-1h1v-1h1v-1h1v-1h1v3h-1v1h-1v1h-1v1h-1v1h-1v-1h-1v-1h-1z" fill="#000"/></svg></div>
<div class="chk" style="left:386px;top:349px;width:13px;height:13px;"><svg width="13" height="13" shape-rendering="crispEdges"><path d="M3 4h1v1h1v1h1v-1h1v-1h1v-1h1v-1h1v3h-1v1h-1v1h-1v1h-1v1h-1v-1h-1v-1h-1z" fill="#000"/></svg></div>
<div class="entry" style="left:381px;top:370px;width:30px;height:20px;background:#c0c0c0"></div>
<div class="chk" style="left:386px;top:399px;width:13px;height:13px;background:#d9d9d9"></div>
<div class="chk" style="left:386px;top:424px;width:13px;height:13px;"></div>
<div class="raised" style="left:381px;top:443px;width:71px;height:25px;"></div>
<div class="raised" style="left:381px;top:468px;width:71px;height:25px;"></div>
<div class="entry" style="left:456px;top:345px;width:150px;height:20px;"></div>
<svg style="left:611px;top:349px" width="12" height="12"><circle cx="6" cy="6" r="5" fill="#fff"/><path d="M9.9 2.1A5.5 5.5 0 0 0 2.1 9.9" fill="none" stroke="#828282" stroke-width="1"/><path d="M9.2 2.8A4.5 4.5 0 0 0 2.8 9.2" fill="none" stroke="#000" stroke-width="1"/><path d="M9.9 2.1A5.5 5.5 0 0 1 2.1 9.9" fill="none" stroke="#fff" stroke-width="1"/><path d="M9.2 2.8A4.5 4.5 0 0 1 2.8 9.2" fill="none" stroke="#d9d9d9" stroke-width="1"/><rect x="4" y="5" width="4" height="2" fill="#000"/><rect x="5" y="4" width="2" height="4" fill="#000"/></svg>
<div class="raised" style="left:635px;top:344px;width:26px;height:24px;"></div>
<div class="entry" style="left:456px;top:370px;width:150px;height:20px;"></div>
<svg style="left:611px;top:374px" width="12" height="12"><circle cx="6" cy="6" r="5" fill="#fff"/><path d="M9.9 2.1A5.5 5.5 0 0 0 2.1 9.9" fill="none" stroke="#828282" stroke-width="1"/><path d="M9.2 2.8A4.5 4.5 0 0 0 2.8 9.2" fill="none" stroke="#000" stroke-width="1"/><path d="M9.9 2.1A5.5 5.5 0 0 1 2.1 9.9" fill="none" stroke="#fff" stroke-width="1"/><path d="M9.2 2.8A4.5 4.5 0 0 1 2.8 9.2" fill="none" stroke="#d9d9d9" stroke-width="1"/></svg>
<div class="raised" style="left:635px;top:368px;width:26px;height:25px;"></div>
<div class="entry" style="left:456px;top:395px;width:150px;height:20px;"></div>
<svg style="left:611px;top:399px" width="12" height="12"><circle cx="6" cy="6" r="5" fill="#fff"/><path d="M9.9 2.1A5.5 5.5 0 0 0 2.1 9.9" fill="none" stroke="#828282" stroke-width="1"/><path d="M9.2 2.8A4.5 4.5 0 0 0 2.8 9.2" fill="none" stroke="#000" stroke-width="1"/><path d="M9.9 2.1A5.5 5.5 0 0 1 2.1 9.9" fill="none" stroke="#fff" stroke-width="1"/><path d="M9.2 2.8A4.5 4.5 0 0 1 2.8 9.2" fill="none" stroke="#d9d9d9" stroke-width="1"/></svg>
<div class="raised" style="left:635px;top:393px;width:26px;height:25px;"></div>
<div class="entry" style="left:456px;top:420px;width:150px;height:20px;"></div>
<svg style="left:611px;top:424px" width="12" height="12"><circle cx="6" cy="6" r="5" fill="#fff"/><path d="M9.9 2.1A5.5 5.5 0 0 0 2.1 9.9" fill="none" stroke="#828282" stroke-width="1"/><path d="M9.2 2.8A4.5 4.5 0 0 0 2.8 9.2" fill="none" stroke="#000" stroke-width="1"/><path d="M9.9 2.1A5.5 5.5 0 0 1 2.1 9.9" fill="none" stroke="#fff" stroke-width="1"/><path d="M9.2 2.8A4.5 4.5 0 0 1 2.8 9.2" fill="none" stroke="#d9d9d9" stroke-width="1"/></svg>
<div class="raised" style="left:635px;top:418px;width:26px;height:25px;"></div>
<div class="entry" style="left:456px;top:445px;width:150px;height:20px;"></div>
<svg style="left:611px;top:449px" width="12" height="12"><circle cx="6" cy="6" r="5" fill="#fff"/><path d="M9.9 2.1A5.5 5.5 0 0 0 2.1 9.9" fill="none" stroke="#828282" stroke-width="1"/><path d="M9.2 2.8A4.5 4.5 0 0 0 2.8 9.2" fill="none" stroke="#000" stroke-width="1"/><path d="M9.9 2.1A5.5 5.5 0 0 1 2.1 9.9" fill="none" stroke="#fff" stroke-width="1"/><path d="M9.2 2.8A4.5 4.5 0 0 1 2.8 9.2" fill="none" stroke="#d9d9d9" stroke-width="1"/></svg>
<div class="raised" style="left:635px;top:443px;width:26px;height:25px;"></div>
<div class="entry" style="left:456px;top:470px;width:150px;height:20px;"></div>
<svg style="left:611px;top:474px" width="12" height="12"><circle cx="6" cy="6" r="5" fill="#fff"/><path d="M9.9 2.1A5.5 5.5 0 0 0 2.1 9.9" fill="none" stroke="#828282" stroke-width="1"/><path d="M9.2 2.8A4.5 4.5 0 0 0 2.8 9.2" fill="none" stroke="#000" stroke-width="1"/><path d="M9.9 2.1A5.5 5.5 0 0 1 2.1 9.9" fill="none" stroke="#fff" stroke-width="1"/><path d="M9.2 2.8A4.5 4.5 0 0 1 2.8 9.2" fill="none" stroke="#d9d9d9" stroke-width="1"/></svg>
<div class="raised" style="left:635px;top:468px;width:26px;height:25px;"></div>
<div class="sunk1" style="left:4px;top:496px;width:660px;height:24px;"></div>
<div class="sunk1" style="left:6px;top:497px;width:83px;height:22px;"></div>
<div class="sunk1" style="left:91px;top:497px;width:45px;height:22px;background:#00ffff;"></div>
<div class="sunk1" style="left:138px;top:497px;width:81px;height:22px;"></div>
<div class="sunk1" style="left:221px;top:497px;width:87px;height:22px;"></div>
<div class="sunk1" style="left:310px;top:497px;width:86px;height:22px;"></div>
<div class="sunk1" style="left:601px;top:497px;width:62px;height:22px;background:#00ff00;"></div>
<div style="left:442px;top:501px;width:119px;height:19px;background:#c0c0c0"></div>
<div id="txt">
<span class="t" style="left:270.19px;top:96px;font-size:11.0px;letter-spacing:0.500px;color:#ffff00;">73</span>
<span class="t" style="left:557.25px;top:10px;font-size:21.33px;letter-spacing:-0.072px;">Moon</span>
<span class="t" style="left:535.06px;top:34px;font-size:21.33px;letter-spacing:-0.500px;">Az:</span>
<span class="t" style="left:580.73px;top:34px;font-size:21.33px;letter-spacing:0.193px;">219.38</span>
<span class="t" style="left:535.45px;top:58px;font-size:21.33px;letter-spacing:-0.500px;">El:</span>
<span class="t" style="left:589.15px;top:58px;font-size:21.33px;letter-spacing:0.180px;">59.76</span>
<span class="t" style="left:535.45px;top:82px;font-size:21.33px;letter-spacing:-0.485px;">Dop:</span>
<span class="t" style="left:609.38px;top:82px;font-size:21.33px;letter-spacing:0.056px;">142</span>
<span class="t" style="left:535.45px;top:106px;font-size:21.33px;letter-spacing:-0.500px;">Dgrd:</span>
<span class="t" style="left:608.05px;top:106px;font-size:21.33px;letter-spacing:0.223px;">-2.2</span>
<span class="t" style="left:30.31px;top:134px;font-size:11px;letter-spacing:0.034px;">-460</span>
<span class="t" style="left:99.16px;top:134px;font-size:11px;letter-spacing:-0.075px;">1.0000</span>
<span class="t" style="left:141.16px;top:134px;font-size:11px;letter-spacing:-0.075px;">1.0000</span>
<span class="t" style="left:233.10px;top:134px;font-size:11px;letter-spacing:-0.151px;">DF (Hz)</span>
<span class="t" style="left:349.10px;top:134px;font-size:11px;letter-spacing:-0.170px;">Mon_070330_140400</span>
<span class="t" style="left:9.83px;top:149px;font-size:10.66px;letter-spacing:-0.450px;">FileID</span>
<span class="t" style="left:53.50px;top:149px;font-size:11px;letter-spacing:0.112px;">Sync</span>
<span class="t" style="left:96.54px;top:149px;font-size:11px;letter-spacing:-0.163px;">dB</span>
<span class="t" style="left:132.60px;top:149px;font-size:11.0px;letter-spacing:-0.300px;">DT</span>
<span class="t" style="left:166.60px;top:149px;font-size:11.0px;letter-spacing:-0.300px;">DF</span>
<span class="t" style="left:191.95px;top:149px;font-size:11.0px;">W</span>
<span class="t m" style="left:9.00px;top:170px;font-size:11px;">135900  0  -32  6.0  315  3</span>
<span class="t m" style="left:9.00px;top:185px;font-size:11px;">140000  0  -28  2.6 -183  3</span>
<span class="t m" style="left:9.00px;top:200px;font-size:11px;">140100  0  -32 -1.0  369 23</span>
<span class="t m" style="left:9.00px;top:215px;font-size:11px;">140200  4  -28      -184  1   RRR ?</span>
<span class="t m" style="left:9.00px;top:230px;font-size:11px;">140300  0  -33  7.5  283 31</span>
<span class="t m" style="left:9.00px;top:245px;font-size:11px;">140400  3  -29      -186  3   73  ?</span>
<span class="t m" style="left:9.00px;top:283px;font-size:11px;">140400  1   0/6</span>
<span class="t m" style="left:9.00px;top:298px;font-size:11px;">140300  2   0/6</span>
<span class="t" style="left:18.60px;top:321px;font-size:11px;letter-spacing:-0.155px;">Log <u>Q</u>SO</span>
<span class="t" style="left:94.00px;top:321px;font-size:11px;letter-spacing:0.028px;"><u>S</u>top</span>
<span class="t" style="left:147.20px;top:321px;font-size:11px;letter-spacing:-0.282px;"><u>M</u>onitor</span>
<span class="t" style="left:212.90px;top:321px;font-size:11px;letter-spacing:0.339px;">Sav<u>e</u></span>
<span class="t" style="left:268.60px;top:321px;font-size:11px;"><u>D</u>ecode</span>
<span class="t" style="left:336.85px;top:321px;font-size:11px;letter-spacing:0.039px;"><u>E</u>rase</span>
<span class="t" style="left:395.94px;top:321px;font-size:11px;letter-spacing:0.084px;"><u>C</u>lear Avg</span>
<span class="t" style="left:475.48px;top:321px;font-size:11px;letter-spacing:0.006px;"><u>I</u>nclude</span>
<span class="t" style="left:542.00px;top:321px;font-size:11px;letter-spacing:-0.065px;">E<u>x</u>clude</span>
<span class="t" style="left:612.75px;top:321px;font-size:11px;letter-spacing:-0.228px;">TxSt<u>o</u>p</span>
<span class="t" style="left:32.75px;top:356px;font-size:11px;letter-spacing:-0.024px;">To radio:</span>
<span class="t" style="left:41.20px;top:381px;font-size:11px;letter-spacing:-0.070px;">Grid:</span>
<span class="t" style="left:97.10px;top:356px;font-size:11px;letter-spacing:-0.342px;">HB9Q</span>
<span class="t" style="left:97.33px;top:381px;font-size:11px;letter-spacing:-0.083px;">JN47cg</span>
<span class="t" style="left:174.85px;top:355px;font-size:11px;letter-spacing:0.055px;"><u>L</u>ookup</span>
<span class="t" style="left:183.98px;top:381px;font-size:11px;letter-spacing:0.204px;">Add</span>
<span class="t" style="left:105.98px;top:407px;font-size:12px;letter-spacing:-0.275px;">Az: 328</span>
<span class="t" style="left:170.19px;top:407px;font-size:12px;letter-spacing:0.263px;">9580 km</span>
<span class="t" style="left:61.33px;top:434px;font-size:21.33px;letter-spacing:0.045px;color:#ffff00;">2007 Mar 30</span>
<span class="t" style="left:80.38px;top:459px;font-size:21.33px;letter-spacing:0.219px;color:#ffff00;">14:05:38</span>
<span class="t" style="left:253.70px;top:360px;font-size:11px;letter-spacing:0.412px;">Sync</span>
<span class="t" style="left:288.16px;top:360px;font-size:11.0px;">1</span>
<span class="t" style="left:257.95px;top:386px;font-size:10.89px;letter-spacing:-0.450px;">Clip</span>
<span class="t" style="left:284.37px;top:386px;font-size:11.0px;">0</span>
<span class="t" style="left:252.55px;top:411px;font-size:11px;letter-spacing:0.211px;">Tol</span>
<span class="t" style="left:278.45px;top:411px;font-size:11px;letter-spacing:-0.085px;">400</span>
<span class="t" style="left:253.30px;top:435px;font-size:11px;letter-spacing:0.150px;">Defaults</span>
<span class="t" style="left:251.10px;top:464px;font-size:11px;letter-spacing:-0.290px;">Dsec</span>
<span class="t" style="left:281.57px;top:464px;font-size:11px;letter-spacing:0.284px;">0.0</span>
<span class="t" style="left:331.85px;top:360px;font-size:11px;letter-spacing:-0.047px;"><u>Z</u>ap</span>
<span class="t" style="left:331.60px;top:386px;font-size:11px;letter-spacing:-0.298px;">NB</span>
<span class="t" style="left:331.30px;top:411px;font-size:11px;letter-spacing:0.041px;"><u>F</u>reeze</span>
<span class="t" style="left:330.98px;top:435px;font-size:11px;letter-spacing:-0.280px;">AFC</span>
<span class="t" style="left:403.75px;top:350px;font-size:11px;letter-spacing:-0.190px;">Tx First</span>
<span class="t" style="left:383.45px;top:375px;font-size:11.0px;letter-spacing:-0.300px;color:#969696;">26</span>
<span class="t" style="left:416.85px;top:375px;font-size:11px;letter-spacing:-0.192px;">Rpt</span>
<span class="t" style="left:403.50px;top:400px;font-size:11px;letter-spacing:-0.217px;color:#a0a0a0;">Sh Msg</span>
<span class="t" style="left:403.50px;top:425px;font-size:11px;letter-spacing:-0.288px;">Sked</span>
<span class="t" style="left:384.20px;top:450px;font-size:11px;letter-spacing:-0.154px;"><u>G</u>enStdMsgs</span>
<span class="t" style="left:390.23px;top:475px;font-size:11px;letter-spacing:0.060px;"><u>A</u>uto is Off</span>
<span class="t" style="left:458.10px;top:350px;font-size:10.96px;letter-spacing:-0.450px;">HB9Q JE2TLZ PM84</span>
<span class="t" style="left:637.75px;top:350px;font-size:11px;letter-spacing:-0.026px;">Tx<u>1</u></span>
<span class="t" style="left:458.10px;top:375px;font-size:11.0px;letter-spacing:-0.450px;">HB9Q JE2TLZ PM84 OOO</span>
<span class="t" style="left:637.75px;top:375px;font-size:11px;letter-spacing:-0.018px;">Tx<u>2</u></span>
<span class="t" style="left:458.10px;top:400px;font-size:11.0px;letter-spacing:-0.300px;">RO</span>
<span class="t" style="left:637.75px;top:400px;font-size:11px;letter-spacing:-0.053px;">Tx<u>3</u></span>
<span class="t" style="left:458.10px;top:425px;font-size:11.0px;letter-spacing:-0.300px;">RRR</span>
<span class="t" style="left:637.75px;top:425px;font-size:11px;letter-spacing:-0.134px;">Tx<u>4</u></span>
<span class="t" style="left:458.44px;top:450px;font-size:11px;letter-spacing:0.062px;">73</span>
<span class="t" style="left:637.75px;top:450px;font-size:11px;letter-spacing:-0.064px;">Tx<u>5</u></span>
<span class="t" style="left:458.45px;top:475px;font-size:10.86px;letter-spacing:-0.450px;">CQ JE2TLZ PM84</span>
<span class="t" style="left:637.75px;top:475px;font-size:11px;letter-spacing:-0.053px;">Tx<u>6</u></span>
<span class="t" style="left:11.76px;top:503px;font-size:11px;letter-spacing:-0.033px;">1.0055 1.0055</span>
<span class="t" style="left:97.73px;top:503px;font-size:10.81px;letter-spacing:-0.450px;">JT65B</span>
<span class="t" style="left:142.85px;top:503px;font-size:11px;letter-spacing:-0.123px;">Freeze DF:</span>
<span class="t" style="left:205.37px;top:503px;font-size:11.0px;">0</span>
<span class="t" style="left:226.30px;top:503px;font-size:11px;letter-spacing:-0.268px;">Rx noise:</span>
<span class="t" style="left:278.37px;top:503px;font-size:11px;letter-spacing:-0.073px;">0 dB</span>
<span class="t" style="left:316.77px;top:504px;font-size:10.34px;letter-spacing:-0.450px;">TR Period:</span>
<span class="t" style="left:368.44px;top:503px;font-size:11px;letter-spacing:-0.112px;">60 s</span>
<span class="t" style="left:606.35px;top:503px;font-size:11px;letter-spacing:0.007px;">Receiving</span>
<span class="t" style="left:444.89px;top:506px;font-size:12px;letter-spacing:0.064px;">144.137MHz</span>
<span class="t" style="left:518.72px;top:506px;font-size:12px;letter-spacing:-0.353px;">RN6BN</span>
</div>
</div>
</body></html>
